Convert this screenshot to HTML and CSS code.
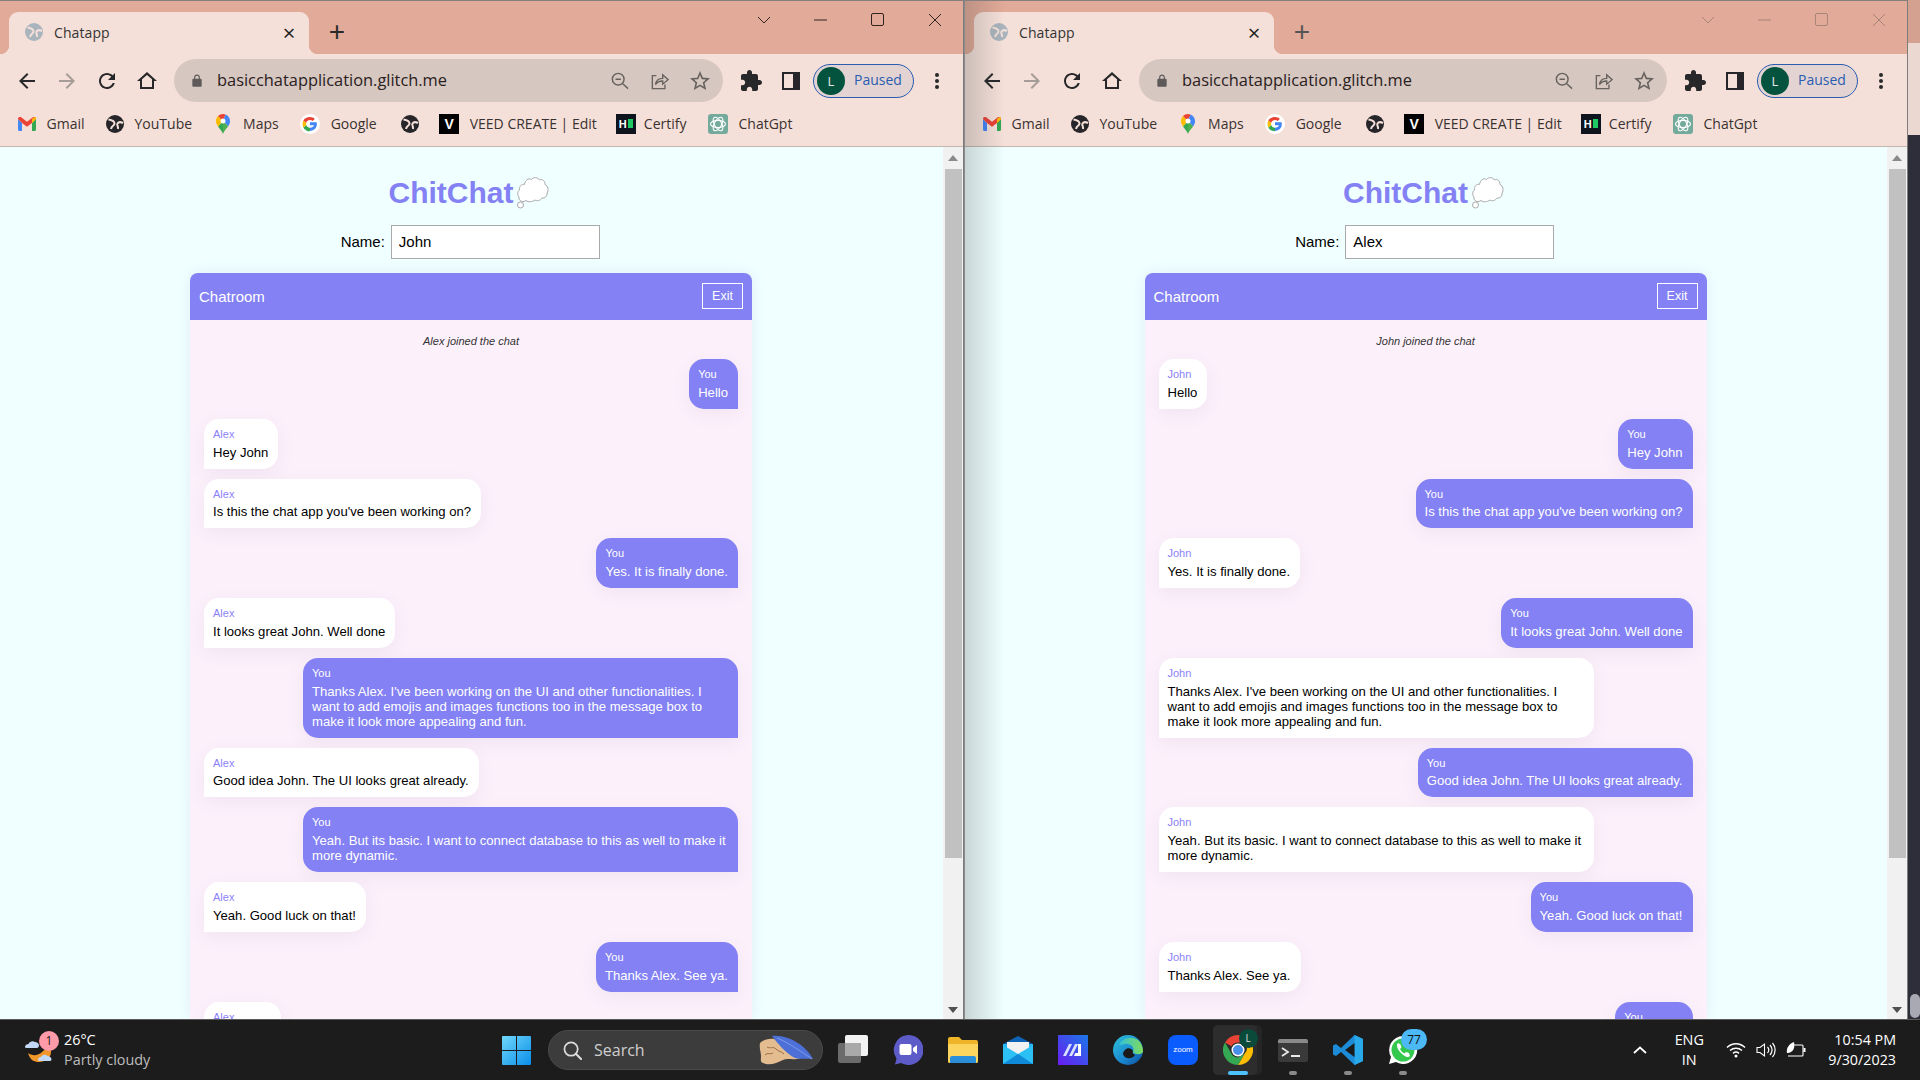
FILE: index.html
```html
<!DOCTYPE html>
<html lang="en">
<head>
  <meta charset="UTF-8" />
  <title>Chatapp</title>
  <link rel="stylesheet" href="styles.css">
</head>
<body>
  <svg class="defs" width="0" height="0">
    <symbol id="i-globe" viewBox="0 0 18 18"><circle cx="9" cy="9" r="9" fill="currentColor"/><path d="M2.500 4.500c3 .5 6 1.500 6 4 0 2.500-3 2-3.500 5.500" fill="none" stroke="#f5e0d9" stroke-width="2"/><path d="M17 8c-2-1-4.500-1-5.500.5s1 3 .5 5.500" fill="none" stroke="#f5e0d9" stroke-width="2"/></symbol>
    <symbol id="i-back" viewBox="0 0 24 24"><path d="M20 11H7.830l5.590-5.590L12 4l-8 8 8 8 1.410-1.410L7.830 13H20v-2z" fill="currentColor"/></symbol>
    <symbol id="i-forward" viewBox="0 0 24 24"><path d="M4 11h12.170l-5.590-5.590L12 4l8 8-8 8-1.410-1.410L16.170 13H4v-2z" fill="currentColor"/></symbol>
    <symbol id="i-reload" viewBox="0 0 24 24"><path d="M17.650 6.350C16.200 4.900 14.210 4 12 4c-4.420 0-7.990 3.580-7.990 8s3.570 8 7.990 8c3.730 0 6.840-2.550 7.730-6h-2.080c-.82 2.330-3.040 4-5.650 4-3.310 0-6-2.690-6-6s2.690-6 6-6c1.660 0 3.140.69 4.220 1.780L13 11h7V4l-2.350 2.350z" fill="currentColor"/></symbol>
    <symbol id="i-home" viewBox="0 0 24 24"><path fill-rule="evenodd" d="M12 3L2 12h3v8h14v-8h3L12 3zm0 2.900l5 4.400V18H7v-7.700l5-4.400z" fill="currentColor"/></symbol>
    <symbol id="i-lock" viewBox="0 0 24 24"><path d="M18 8h-1V6c0-2.760-2.240-5-5-5S7 3.240 7 6v2H6c-1.100 0-2 .9-2 2v10c0 1.100.9 2 2 2h12c1.100 0 2-.9 2-2V10c0-1.100-.9-2-2-2zM9 6c0-1.660 1.340-3 3-3s3 1.340 3 3v2H9V6z" fill="currentColor"/></symbol>
    <symbol id="i-zoomout" viewBox="0 0 20 20"><circle cx="8" cy="8" r="6.500" fill="none" stroke="currentColor" stroke-width="1.600"/><path d="M5 8h6M13 13l6 5.500" fill="none" stroke="currentColor" stroke-width="1.600"/></symbol>
    <symbol id="i-share" viewBox="0 0 20 20"><path d="M6 4H1.500v14.500h14V14M5 14c.5-4 3.500-7 8-7V3l6 5.500-6 5V10c-3 0-6 1-8 4z" fill="none" stroke="currentColor" stroke-width="1.500"/></symbol>
    <symbol id="i-star" viewBox="0 0 24 24"><path d="M22 9.240l-7.190-.62L12 2 9.190 8.630 2 9.240l5.460 4.730L5.820 21 12 17.270 18.180 21l-1.630-7.030L22 9.240zM12 15.400l-3.760 2.270 1-4.280-3.320-2.880 4.380-.38L12 6.100l1.710 4.040 4.380.38-3.320 2.880 1 4.280L12 15.400z" fill="currentColor"/></symbol>
    <symbol id="i-ext" viewBox="0 0 24 24"><path d="M20.500 11H19V7c0-1.100-.9-2-2-2h-4V3.500C13 2.120 11.880 1 10.500 1S8 2.120 8 3.500V5H4c-1.100 0-1.990.9-1.990 2v3.800H3.500c1.490 0 2.700 1.210 2.700 2.700s-1.210 2.700-2.700 2.700H2V20c0 1.100.9 2 2 2h3.800v-1.500c0-1.490 1.210-2.700 2.700-2.700 1.490 0 2.700 1.210 2.700 2.700V22H17c1.100 0 2-.9 2-2v-4h1.500c1.380 0 2.500-1.120 2.500-2.500S21.880 11 20.500 11z" fill="currentColor"/></symbol>
    <symbol id="i-panel" viewBox="0 0 18 18"><rect width="18" height="18" fill="#26262a"/><rect x="2" y="2" width="9" height="14" fill="#f5e0d9"/></symbol>
    <symbol id="i-dots" viewBox="0 0 6 18"><circle cx="3" cy="3" r="2" fill="currentColor"/><circle cx="3" cy="9" r="2" fill="currentColor"/><circle cx="3" cy="15" r="2" fill="currentColor"/></symbol>
    <symbol id="i-gmail" viewBox="0 0 18 14"><path d="M0 2v10.500c0 .8.6 1.500 1.500 1.500H4V6z" fill="#4285f4"/><path d="M14 6v8h2.500c.9 0 1.500-.7 1.500-1.500V2z" fill="#34a853"/><path d="M0 2c0-2 2-2.500 3.500-1.500L9 4.700 14.500.5C16 -.5 18 0 18 2l-4 4-5 3.800L4 6z" fill="#ea4335"/><path d="M14 6l4-4c0-1-.5-1.700-1.200-2L14 2z" fill="#fbbc04"/></symbol>
    <symbol id="i-maps" viewBox="0 0 14 20"><path d="M7 20c-1-3-3-4.500-5-7.500L7 7z" fill="#34a853"/><path d="M7 20c.8-2.800 3-4.800 5.300-7.800L7 7z" fill="#4caf50"/><path d="M2 12.500C.6 10.500 0 9 0 7c0-2 .8-3.600 2-4.900L7 7z" fill="#fbbc04"/><path d="M2 2.100C3.300.8 5 0 7 0c.8 0 1.700.2 2.500.5L7 7z" fill="#ea4335"/><path d="M9.500.5C12 1.400 14 4 14 7c0 2-.6 3.500-1.700 5.200L7 7z" fill="#4285f4"/><circle cx="7" cy="7" r="2.500" fill="#fff"/></symbol>
    <symbol id="i-google" viewBox="0 0 20 20"><circle cx="10" cy="10" r="10" fill="#fff"/><path d="M10 8.300v3h4c-.4 1.500-2 2.500-4 2.500v3c3.800 0 6.800-2.600 6.800-6.500 0-.7 0-1.300-.2-2z" fill="#4285f4"/><path d="M10 13.800c-1.800 0-3.200-1.100-3.700-2.700l-3 2.300c1.200 2.400 3.700 3.900 6.700 3.900z" fill="#34a853"/><path d="M6.300 11.100c-.3-.8-.3-1.700 0-2.400l-3-2.300c-1 2.100-1 4.900 0 7z" fill="#fbbc04"/><path d="M3.300 6.400l3 2.300C6.800 7.200 8.200 6.100 10 6.100c1 0 1.900.4 2.600 1l2.200-2.200C13.600 3.800 12 3.100 10 3.100c-3 0-5.500 1.400-6.700 3.300z" fill="#ea4335"/></symbol>
    <symbol id="i-openai" viewBox="0 0 20 20"><rect width="20" height="20" rx="3" fill="#74aa9c"/><g fill="none" stroke="#fff" stroke-width="1.100"><ellipse cx="10" cy="10" rx="7.500" ry="3.600"/><ellipse cx="10" cy="10" rx="7.500" ry="3.600" transform="rotate(60 10 10)"/><ellipse cx="10" cy="10" rx="7.500" ry="3.600" transform="rotate(120 10 10)"/></g></symbol>
    <symbol id="i-thought" viewBox="0 0 32 32"><g fill="#fff" stroke="#a9a9a9" stroke-width="1"><circle cx="3.500" cy="28" r="3"/><path d="M7 24.500c-3 .5-5.500-1.500-5-4.500-2-2-1.500-6 .5-7C2 9.500 4.500 6.500 7.500 7.500c.5-4 4-7 7-5C16 0 21 0 22.500 3c3-1.500 5.500 1 5.500 4.500 3 1 4 6 2 8.500.5 3-2 5.500-5 5-1.500 2.500-5 3.500-7 2-3 2-6.500 2.500-9 .5z"/></g></symbol>
    <symbol id="i-weather" viewBox="0 0 30 32"><path d="M3 19c4 3 10 3 14-1 3-2 5-5 6-8 2 1 3 4 3 8 0 6-6 10-12 10-5 0-9-2-11-9z" fill="#f0962a"/><path d="M0 13c0-2 2-3 3.500-3C4.500 7.500 8 6.500 10 8c2 0 4 1.500 4 3.500s-1.500 2.500-3 2.500H2c-1.500 0-2-.5-2-1z" fill="#c2d8f5"/><path d="M13 26c0-2 1.500-3 3-3 1-2.500 5-3 6.500-1 2 0 4 1.500 4 3.500 0 1-1 1.500-2.500 1.500h-9c-1.500 0-2-.5-2-1z" fill="#c2d8f5"/></symbol>
    <symbol id="i-start" viewBox="0 0 29 29"><defs><linearGradient id="g-start" x1="0" y1="0" x2="1" y2="1"><stop offset="0" stop-color="#6fd9fb"/><stop offset="1" stop-color="#0a8ce8"/></linearGradient></defs><path d="M0 1a1 1 0 0 1 1-1h13v14H0zM15 0h13a1 1 0 0 1 1 1v13H15zM0 15h14v14H1a1 1 0 0 1-1-1zM15 15h14v13a1 1 0 0 1-1 1H15z" fill="url(#g-start)"/></symbol>
    <symbol id="i-search" viewBox="0 0 20 20"><circle cx="8.500" cy="8.500" r="7" fill="none" stroke="#dcdcdc" stroke-width="1.800"/><path d="M13.500 13.500l5.500 5.500" stroke="#dcdcdc" stroke-width="2.200" stroke-linecap="round"/></symbol>
    <symbol id="i-doodle" viewBox="0 0 56 30"><path d="M1 8c3-3 9-5 14-4 6 1 9 4 14 6 4 2 6 7 12 9 2 2 1 5-3 5-6 1-10-1-14 1-6 3-14 6-20 3-3-1-2-4-2-7 0-4-2-8-1-13z" fill="#e3bd8f"/><path d="M8 12c3 2 6-1 9 2s5 2 8 5M6 20c3-3 5 0 8-2" fill="none" stroke="#9c6f45" stroke-width="1"/><path d="M13 1c9-1 18 2 26 7 6 4 12 10 15 16-6-1-15 1-20-2-8-5-15-13-21-21z" fill="#4c70d8"/><path d="M18 3c10 4 22 12 35 21" fill="none" stroke="#8aa4ee" stroke-width=".8"/></symbol>
    <symbol id="i-taskview" viewBox="0 0 30 30"><rect y="8" width="23" height="20" rx="2" fill="#6b6b6b"/><rect x="7" width="23" height="21" rx="2" fill="#f2f2f2"/><rect x="7" y="8" width="16" height="13" fill="#a9a9a9"/></symbol>
    <symbol id="i-meet" viewBox="0 0 30 30"><path d="M15 0a15 15 0 1 1-7 28l-6 1.500 1.500-6A15 15 0 0 1 15 0z" fill="#5d5bc8"/><rect x="6.500" y="9" width="12" height="11" rx="2" fill="#fff"/><path d="M20 13l4-3v9l-4-3z" fill="#fff"/></symbol>
    <symbol id="i-folder" viewBox="0 0 30 30"><path d="M0 4a2 2 0 0 1 2-2h9l3 3h14a2 2 0 0 1 2 2v19a2 2 0 0 1-2 2H2a2 2 0 0 1-2-2z" fill="#f0b429"/><path d="M0 9h30v17a2 2 0 0 1-2 2H2a2 2 0 0 1-2-2z" fill="#fcd55f"/><path d="M4 21h22a2 2 0 0 1 2 2v5H2v-5a2 2 0 0 1 2-2z" fill="#2a8fd8"/></symbol>
    <symbol id="i-mail" viewBox="0 0 30 30"><path d="M15 1l15 8v4H0V9z" fill="#0f63b5"/><path d="M0 9h30v20H0z" fill="#28b4ee"/><path d="M4 7h22v7l-11 6-11-6z" fill="#f2f2f2"/><path d="M0 10l15 9 15-9v19H0z" fill="#2cc0f5"/><path d="M0 29l15-10 15 10z" fill="#0f8ad8"/></symbol>
    <symbol id="i-math" viewBox="0 0 30 30"><defs><linearGradient id="g-math" x1="0" y1="1" x2="1" y2="0"><stop offset="0" stop-color="#6a1cf0"/><stop offset="1" stop-color="#1a78e8"/></linearGradient></defs><rect width="30" height="30" fill="url(#g-math)"/><path d="M5 21l6-12h3l-6 12zM11 21l6-12h3l-6 12z" fill="#dbe2ff"/><path d="M20 9h3v12h-7l1.200-3H20z" fill="#fff"/></symbol>
    <symbol id="i-edge" viewBox="0 0 30 30"><defs><linearGradient id="g-edge" x1="0" y1="0" x2="1" y2="1"><stop offset="0" stop-color="#2cc4d8"/><stop offset=".6" stop-color="#1b84d0"/><stop offset="1" stop-color="#0c4f98"/></linearGradient><linearGradient id="g-edge2" x1="0" y1="0" x2="1" y2="0"><stop offset="0" stop-color="#35c1d8"/><stop offset="1" stop-color="#7fdb5c"/></linearGradient></defs><circle cx="15" cy="15" r="15" fill="url(#g-edge)"/><path d="M6 10C9 3 19 0 26 6c3 3 4 7 4 11-2 3-8 3-10 0 2-5-3-9-8-8-3 .5-5 1-6 1z" fill="url(#g-edge2)"/><path d="M12 15c2-3 7-2 8 1-1 2 0 3 2 4-3 5-11 4-12-1 0-2 1-3 2-4z" fill="#1a1a1a"/></symbol>
    <symbol id="i-chrome" viewBox="0 0 30 30"><path d="M15 0a15 15 0 0 1 13 7.500H15a7.500 7.500 0 0 0-6.500 3.750L2 7.500A15 15 0 0 1 15 0z" fill="#ea4335"/><path d="M28 7.500A15 15 0 0 1 15 30l6.500-11.250a7.500 7.500 0 0 0 0-11.250z" fill="#fbbc04"/><path d="M15 30A15 15 0 0 1 2 7.500l6.500 11.250a7.500 7.500 0 0 0 6.500 3.750l6.500-3.750z" fill="#34a853"/><circle cx="15" cy="15" r="6.500" fill="#fff"/><circle cx="15" cy="15" r="5" fill="#4a90e8"/></symbol>
    <symbol id="i-terminal" viewBox="0 0 30 23"><rect width="30" height="23" rx="2" fill="#3a3a3a"/><path d="M2 0h26a2 2 0 0 1 2 2v2H0V2a2 2 0 0 1 2-2z" fill="#8a8a8a"/><path d="M4 9l6 4-6 4" fill="none" stroke="#e8e8e8" stroke-width="1.800"/><path d="M13 17h9" stroke="#e8e8e8" stroke-width="2"/></symbol>
    <symbol id="i-vscode" viewBox="0 0 30 30"><path d="M21.500 0L30 4v22l-8.500 4L8 17l-5 4-3-1.500v-9L3 9l5 4z" fill="#1c8cd8"/><path d="M21.500 0L30 4v22l-8.500 4z" fill="#29a8ea"/><path d="M21.500 8L12 15l9.500 7z" fill="#1a1a1a"/></symbol>
    <symbol id="i-whatsapp" viewBox="0 0 30 30"><path d="M15 1a14 14 0 1 1-7 26l-7 2 2-7A14 14 0 0 1 15 1z" fill="#fff"/><circle cx="15" cy="15" r="11.500" fill="#35c84f"/><path d="M10 8c-2 2-1 6 3 10s7 5 9 3l-1-3-3-1-1.500 1.500c-2-1-3.500-2.500-4.500-4.500l1.500-1.500-1-3z" fill="#fff"/></symbol>
    <symbol id="i-wifi" viewBox="0 0 20 16"><path d="M1 5.500c5-5 13-5 18 0M4 8.500c3.500-3 8.500-3 12 0M7 11.300c1.700-1.400 4.300-1.400 6 0" fill="none" stroke="#fff" stroke-width="1.500"/><circle cx="10" cy="14" r="1.500" fill="#fff"/></symbol>
    <symbol id="i-volume" viewBox="0 0 20 16"><path d="M1 5.500h3L8.500 2v12L4 10.500H1z" fill="none" stroke="#fff" stroke-width="1.100"/><path d="M11.500 5c1.500 1.700 1.500 4.300 0 6M14 3c2.500 3 2.500 7 0 10M16.500 1c3.500 4 3.500 10 0 14" fill="none" stroke="#fff" stroke-width="1.200"/></symbol>
    <symbol id="i-battery" viewBox="0 0 20 16"><path d="M8 3h8a1 1 0 0 1 1 1v9a1 1 0 0 1-1 1H2" fill="none" stroke="#fff" stroke-width="1.100"/><rect x="17.500" y="6" width="2" height="4" fill="#fff"/><path d="M1 11C0 6 3 2 8 0c1 5 0 10-6 11z" fill="#fff"/></symbol>
    <symbol id="i-tray-up" viewBox="0 0 14 8"><path d="M1 7l6-5.500L13 7" fill="none" stroke="#fff" stroke-width="1.800"/></symbol>
  </svg>

  <div class="desktop">
    <!-- left window, John -->
    <section class="window">
      <div class="tabstrip">
        <div class="tab">
          <svg class="favicon"><use href="#i-globe"/></svg>
          <span class="tab-title">Chatapp</span>
          <span class="tab-close">×</span>
        </div>
        <span class="new-tab">+</span>
        <div class="win-controls">
          <span class="win-btn"><svg width="14" height="8" viewBox="0 0 14 8"><path d="M1 1l6 6 6-6" fill="none" stroke="currentColor"/></svg></span>
          <span class="win-btn"><svg width="14" height="14" viewBox="0 0 14 14"><path d="M0 7h13" stroke="currentColor"/></svg></span>
          <span class="win-btn"><svg width="14" height="14" viewBox="0 0 14 14"><rect x=".5" y=".5" width="12" height="12" rx="1.500" fill="none" stroke="currentColor"/></svg></span>
          <span class="win-btn"><svg width="14" height="14" viewBox="0 0 14 14"><path d="M1 1l12 12M13 1L1 13" stroke="currentColor"/></svg></span>
        </div>
      </div>
      <div class="toolbar">
        <span class="tool"><svg class="ic"><use href="#i-back"/></svg></span>
        <span class="tool off"><svg class="ic"><use href="#i-forward"/></svg></span>
        <span class="tool"><svg class="ic"><use href="#i-reload"/></svg></span>
        <span class="tool"><svg class="ic"><use href="#i-home"/></svg></span>
        <div class="omnibox">
          <svg class="lock"><use href="#i-lock"/></svg>
          <span class="url">basicchatapplication.glitch.me</span>
          <span class="tool grey"><svg class="ic-s"><use href="#i-zoomout"/></svg></span>
          <span class="tool grey"><svg class="ic-s"><use href="#i-share"/></svg></span>
          <span class="tool grey"><svg class="ic"><use href="#i-star"/></svg></span>
        </div>
        <span class="tool ext"><svg class="ic"><use href="#i-ext"/></svg></span>
        <span class="tool"><svg class="ic-s"><use href="#i-panel"/></svg></span>
        <div class="profile"><span class="avatar">L</span><span class="paused">Paused</span></div>
        <span class="tool"><svg class="dots"><use href="#i-dots"/></svg></span>
      </div>
      <div class="bookmarks">
        <span class="mark"><svg class="b-gmail"><use href="#i-gmail"/></svg>Gmail</span>
        <span class="mark"><svg class="b-icon"><use href="#i-globe"/></svg>YouTube</span>
        <span class="mark"><svg class="b-maps"><use href="#i-maps"/></svg>Maps</span>
        <span class="mark"><svg class="b-icon b-wide"><use href="#i-google"/></svg>Google</span>
        <span class="mark"><svg class="b-icon b-lone"><use href="#i-globe"/></svg></span>
        <span class="mark"><span class="box-v">V</span>VEED CREATE | Edit</span>
        <span class="mark"><span class="box-h">H<i></i></span>Certify</span>
        <span class="mark"><svg class="b-wide"><use href="#i-openai"/></svg>ChatGpt</span>
      </div>
      <div class="viewport">
        <main class="page">
          <div class="logo">ChitChat<svg class="thought"><use href="#i-thought"/></svg></div>
          <div class="name-row"><label>Name:</label><input class="name-input" type="text" value="John"></div>
          <div class="chat">
            <div class="chat-head"><span>Chatroom</span><button class="exit">Exit</button></div>
            <div class="chat-body">
              <div class="system">Alex joined the chat</div>
              <div class="msg me"><div class="who">You</div><div>Hello</div></div>
              <div class="msg"><div class="who">Alex</div><div>Hey John</div></div>
              <div class="msg"><div class="who">Alex</div><div>Is this the chat app you've been working on?</div></div>
              <div class="msg me"><div class="who">You</div><div>Yes. It is finally done.</div></div>
              <div class="msg"><div class="who">Alex</div><div>It looks great John. Well done</div></div>
              <div class="msg me"><div class="who">You</div><div>Thanks Alex. I've been working on the UI and other functionalities. I want to add emojis and images functions too in the message box to make it look more appealing and fun.</div></div>
              <div class="msg"><div class="who">Alex</div><div>Good idea John. The UI looks great already.</div></div>
              <div class="msg me"><div class="who">You</div><div>Yeah. But its basic. I want to connect database to this as well to make it more dynamic.</div></div>
              <div class="msg"><div class="who">Alex</div><div>Yeah. Good luck on that!</div></div>
              <div class="msg me"><div class="who">You</div><div>Thanks Alex. See ya.</div></div>
              <div class="msg"><div class="who">Alex</div><div>Bye John.</div></div>
            </div>
          </div>
        </main>
        <div class="scrollbar"><span class="arrow up"></span><span class="thumb"></span><span class="arrow down"></span></div>
      </div>
    </section>

    <!-- right window, Alex -->
    <section class="window second">
      <div class="tabstrip">
        <div class="tab">
          <svg class="favicon"><use href="#i-globe"/></svg>
          <span class="tab-title">Chatapp</span>
          <span class="tab-close">×</span>
        </div>
        <span class="new-tab">+</span>
        <div class="win-controls">
          <span class="win-btn"><svg width="14" height="8" viewBox="0 0 14 8"><path d="M1 1l6 6 6-6" fill="none" stroke="currentColor"/></svg></span>
          <span class="win-btn"><svg width="14" height="14" viewBox="0 0 14 14"><path d="M0 7h13" stroke="currentColor"/></svg></span>
          <span class="win-btn"><svg width="14" height="14" viewBox="0 0 14 14"><rect x=".5" y=".5" width="12" height="12" rx="1.500" fill="none" stroke="currentColor"/></svg></span>
          <span class="win-btn"><svg width="14" height="14" viewBox="0 0 14 14"><path d="M1 1l12 12M13 1L1 13" stroke="currentColor"/></svg></span>
        </div>
      </div>
      <div class="toolbar">
        <span class="tool"><svg class="ic"><use href="#i-back"/></svg></span>
        <span class="tool off"><svg class="ic"><use href="#i-forward"/></svg></span>
        <span class="tool"><svg class="ic"><use href="#i-reload"/></svg></span>
        <span class="tool"><svg class="ic"><use href="#i-home"/></svg></span>
        <div class="omnibox">
          <svg class="lock"><use href="#i-lock"/></svg>
          <span class="url">basicchatapplication.glitch.me</span>
          <span class="tool grey"><svg class="ic-s"><use href="#i-zoomout"/></svg></span>
          <span class="tool grey"><svg class="ic-s"><use href="#i-share"/></svg></span>
          <span class="tool grey"><svg class="ic"><use href="#i-star"/></svg></span>
        </div>
        <span class="tool ext"><svg class="ic"><use href="#i-ext"/></svg></span>
        <span class="tool"><svg class="ic-s"><use href="#i-panel"/></svg></span>
        <div class="profile"><span class="avatar">L</span><span class="paused">Paused</span></div>
        <span class="tool"><svg class="dots"><use href="#i-dots"/></svg></span>
      </div>
      <div class="bookmarks">
        <span class="mark"><svg class="b-gmail"><use href="#i-gmail"/></svg>Gmail</span>
        <span class="mark"><svg class="b-icon"><use href="#i-globe"/></svg>YouTube</span>
        <span class="mark"><svg class="b-maps"><use href="#i-maps"/></svg>Maps</span>
        <span class="mark"><svg class="b-icon b-wide"><use href="#i-google"/></svg>Google</span>
        <span class="mark"><svg class="b-icon b-lone"><use href="#i-globe"/></svg></span>
        <span class="mark"><span class="box-v">V</span>VEED CREATE | Edit</span>
        <span class="mark"><span class="box-h">H<i></i></span>Certify</span>
        <span class="mark"><svg class="b-wide"><use href="#i-openai"/></svg>ChatGpt</span>
      </div>
      <div class="viewport">
        <main class="page">
          <div class="logo">ChitChat<svg class="thought"><use href="#i-thought"/></svg></div>
          <div class="name-row"><label>Name:</label><input class="name-input" type="text" value="Alex"></div>
          <div class="chat">
            <div class="chat-head"><span>Chatroom</span><button class="exit">Exit</button></div>
            <div class="chat-body">
              <div class="system">John joined the chat</div>
              <div class="msg"><div class="who">John</div><div>Hello</div></div>
              <div class="msg me"><div class="who">You</div><div>Hey John</div></div>
              <div class="msg me"><div class="who">You</div><div>Is this the chat app you've been working on?</div></div>
              <div class="msg"><div class="who">John</div><div>Yes. It is finally done.</div></div>
              <div class="msg me"><div class="who">You</div><div>It looks great John. Well done</div></div>
              <div class="msg"><div class="who">John</div><div>Thanks Alex. I've been working on the UI and other functionalities. I want to add emojis and images functions too in the message box to make it look more appealing and fun.</div></div>
              <div class="msg me"><div class="who">You</div><div>Good idea John. The UI looks great already.</div></div>
              <div class="msg"><div class="who">John</div><div>Yeah. But its basic. I want to connect database to this as well to make it more dynamic.</div></div>
              <div class="msg me"><div class="who">You</div><div>Yeah. Good luck on that!</div></div>
              <div class="msg"><div class="who">John</div><div>Thanks Alex. See ya.</div></div>
              <div class="msg me"><div class="who">You</div><div>Bye John.</div></div>
            </div>
          </div>
        </main>
        <div class="scrollbar"><span class="arrow up"></span><span class="thumb"></span><span class="arrow down"></span></div>
      </div>
    </section>
    <div class="peek"><span class="peek-top"></span><span class="peek-mid"></span><span class="peek-thumb"></span></div>
  </div>

  <footer class="taskbar">
    <div class="weather">
      <span class="weather-icon"><svg class="w-svg"><use href="#i-weather"/></svg><span class="w-badge">1</span></span>
      <div class="weather-text"><div>26°C</div><div class="dim">Partly cloudy</div></div>
    </div>
    <div class="apps">
      <svg class="start"><use href="#i-start"/></svg>
      <div class="search"><svg class="s-icon"><use href="#i-search"/></svg><span>Search</span><svg class="doodle"><use href="#i-doodle"/></svg></div>
      <span class="app"><svg><use href="#i-taskview"/></svg></span>
      <span class="app"><svg><use href="#i-meet"/></svg></span>
      <span class="app"><svg><use href="#i-folder"/></svg></span>
      <span class="app"><svg><use href="#i-mail"/></svg></span>
      <span class="app"><svg><use href="#i-math"/></svg></span>
      <span class="app"><svg><use href="#i-edge"/></svg></span>
      <span class="app"><span class="zoom-tile">zoom</span></span>
      <span class="app active"><svg><use href="#i-chrome"/></svg><span class="chrome-badge">L</span><i class="run on"></i></span>
      <span class="app"><svg class="term"><use href="#i-terminal"/></svg><i class="run"></i></span>
      <span class="app"><svg><use href="#i-vscode"/></svg><i class="run"></i></span>
      <span class="app"><svg><use href="#i-whatsapp"/></svg><span class="wa-badge">77</span><i class="run"></i></span>
    </div>
    <div class="tray">
      <svg class="tray-up"><use href="#i-tray-up"/></svg>
      <div class="lang">ENG<br>IN</div>
      <svg class="t-icon"><use href="#i-wifi"/></svg>
      <svg class="t-icon"><use href="#i-volume"/></svg>
      <svg class="t-icon"><use href="#i-battery"/></svg>
      <div class="clock">10:54 PM<br>9/30/2023</div>
    </div>
  </footer>
</body>
</html>
```
FILE: styles.css
```css
* {
  box-sizing: border-box;
}

body {
  margin: 0;
  width: 1920px;
  height: 1080px;
  overflow: hidden;
  display: flex;
  flex-direction: column;
  background: #1c1c1c;
  font-family: "Open Sans", sans-serif;
}

.defs {
  position: absolute;
}

.desktop {
  display: flex;
  height: 1019px;
  background: #8a8a8a;
  overflow: hidden;
}

.window {
  position: relative;
  width: 964px;
  height: 100%;
  display: flex;
  flex-direction: column;
  border-top: 1px solid #85807e;
  border-right: 1px solid #7d7d7d;
}

.window.second {
  width: 943px;
  margin-left: 1px;
}

.window.second::before {
  content: "";
  position: absolute;
  left: 0;
  top: 0;
  bottom: 0;
  width: 40px;
  background: linear-gradient(90deg, rgba(40, 50, 50, 0.2), rgba(40, 50, 50, 0));
  z-index: 5;
  pointer-events: none;
}

/* chrome */
.tabstrip {
  height: 53px;
  flex: none;
  display: flex;
  align-items: flex-end;
  background: #e2aa98;
  padding-left: 9px;
}

.tab {
  position: relative;
  width: 300px;
  height: 42px;
  display: flex;
  align-items: center;
  background: #f5e0d9;
  border-radius: 9px 9px 0 0;
  padding: 0 0 2px 16px;
  font-size: 14px;
  color: #333;
}

.tab::before,
.tab::after {
  content: "";
  position: absolute;
  bottom: 0;
  width: 9px;
  height: 9px;
}

.tab::before {
  left: -9px;
  background: radial-gradient(circle at 0 0, transparent 9px, #f5e0d9 9.5px);
}

.tab::after {
  right: -9px;
  background: radial-gradient(circle at 100% 0, transparent 9px, #f5e0d9 9.5px);
}

.favicon {
  width: 18px;
  height: 18px;
  color: #a9b4bd;
  margin-right: 11px;
}

.tab-title {
  flex: 1;
  letter-spacing: 0.1px;
}

.tab-close {
  width: 24px;
  font-size: 22px;
  line-height: 22px;
  color: #222;
  text-align: center;
  margin-right: 8px;
}

.new-tab {
  width: 56px;
  height: 42px;
  padding-bottom: 2px;
  display: flex;
  align-items: center;
  justify-content: center;
  font-family: "Liberation Sans", sans-serif;
  font-size: 28px;
  color: #2a2a2a;
}

.win-controls {
  margin-left: auto;
  height: 100%;
  display: flex;
}

.win-btn {
  width: 57px;
  height: 38px;
  display: flex;
  align-items: center;
  justify-content: center;
  color: #33231e;
}

.second .win-btn {
  color: #a98478;
}

.second .new-tab {
  color: #555;
}

.toolbar {
  height: 53px;
  flex: none;
  display: flex;
  align-items: center;
  background: #f5e0d9;
  padding: 0 6px 0 7px;
}

.tool {
  width: 40px;
  height: 40px;
  flex: none;
  display: flex;
  align-items: center;
  justify-content: center;
  color: #28282a;
}

.tool.off {
  color: #a69c98;
}

.tool.grey {
  color: #68625f;
}

.ic {
  width: 24px;
  height: 24px;
}

.ic-s {
  width: 18px;
  height: 18px;
}

.dots {
  width: 6px;
  height: 18px;
}

.omnibox {
  flex: 1;
  height: 43px;
  margin: 0 8px 0 7px;
  display: flex;
  align-items: center;
  background: #d6c7c0;
  border-radius: 22px;
  padding: 0 3px 0 16px;
}

.lock {
  width: 14px;
  height: 16px;
  color: #5f5a5a;
  margin-right: 13px;
}

.url {
  flex: 1;
  padding-bottom: 2px;
  font-size: 16.4px;
  color: #2a2020;
}

.profile {
  width: 101px;
  height: 34px;
  flex: none;
  margin: 0 3px 0 2px;
  display: flex;
  align-items: center;
  background: #e3d4d3;
  border: 1px solid #2a5cb0;
  border-radius: 17px;
  padding-left: 3px;
}

.avatar {
  width: 28px;
  height: 28px;
  border-radius: 50%;
  background: #03533f;
  color: #e8e8e8;
  font-size: 13px;
  display: flex;
  align-items: center;
  justify-content: center;
}

.paused {
  margin-left: 9px;
  padding-bottom: 2px;
  font-size: 14px;
  color: #2a5cb0;
}

.bookmarks {
  height: 40px;
  flex: none;
  display: flex;
  align-items: center;
  gap: 21.5px;
  background: #f5e0d9;
  border-bottom: 1px solid #c4b5ae;
  padding: 0 0 6px 18px;
  font-size: 14px;
  color: #3a3230;
}

.mark {
  display: flex;
  align-items: center;
  gap: 10.5px;
}

.b-gmail {
  width: 18px;
  height: 14px;
}

.b-icon {
  width: 18px;
  height: 18px;
  color: #26262a;
}

.b-lone {
  margin-left: 2.5px;
}

.b-maps {
  width: 14px;
  height: 20px;
  margin: 0 2.5px;
}

.b-wide {
  width: 20px;
  height: 20px;
}

.box-v,
.box-h {
  width: 20px;
  height: 20px;
  display: flex;
  align-items: center;
  justify-content: center;
  color: #fff;
  font-family: "Liberation Sans", sans-serif;
  font-weight: bold;
  font-size: 14px;
}

.box-v {
  background: #000;
  margin-left: -1px;
}

.box-h {
  background: #0e141e;
  font-size: 11px;
  gap: 1px;
  margin: 0 -2.5px;
}

.box-h i {
  width: 5px;
  height: 9px;
  background: #1ec964;
}

/* page */
.viewport {
  flex: 1;
  min-height: 0;
  display: flex;
  background: #f0ffff;
  overflow: hidden;
}

.page {
  flex: 1;
  min-width: 0;
  display: flex;
  flex-direction: column;
  align-items: center;
  padding: 29px 1px 0 0;
  font-family: "Liberation Sans", Arial, sans-serif;
}

.logo {
  display: flex;
  align-items: center;
  gap: 4px;
  height: 33px;
  margin: 0 4px 1px 0;
  font-size: 30px;
  font-weight: bold;
  color: #8381f3;
}

.thought {
  width: 32px;
  height: 32px;
}

.name-row {
  margin: 15px 0 0 -1.5px;
  display: flex;
  align-items: center;
  gap: 6px;
  font-size: 15px;
  color: #000;
}

.name-row label {
  padding-bottom: 2px;
}

.name-input {
  width: 209px;
  height: 34px;
  border: 1px solid #a9a9a9;
  border-radius: 0;
  outline: none;
  padding: 0 7px 2px;
  font-family: "Liberation Sans", Arial, sans-serif;
  font-size: 15px;
  color: #000;
}

.chat {
  width: 562px;
  margin-top: 14px;
  flex: 1;
  min-height: 0;
  display: flex;
  flex-direction: column;
  background: #fcf0fb;
  border-radius: 8px 8px 0 0;
  box-shadow: 0 0 14px rgba(90, 90, 160, 0.1);
}

.chat-head {
  height: 47px;
  flex: none;
  display: flex;
  align-items: center;
  justify-content: space-between;
  background: #8381f3;
  border-radius: 8px 8px 0 0;
  padding: 0 9px;
  color: #fff;
  font-size: 15px;
}

.exit {
  width: 41px;
  height: 26px;
  margin-bottom: 2px;
  background: transparent;
  border: 1px solid #fff;
  color: #fff;
  padding: 0;
  font-family: "Liberation Sans", Arial, sans-serif;
  font-size: 12.5px;
}

.chat-body {
  flex: 1;
  min-height: 0;
  overflow: hidden;
  display: flex;
  flex-direction: column;
  align-items: flex-start;
  gap: 10px;
  padding: 15px 14px 0;
}

.system {
  align-self: center;
  height: 13px;
  margin-bottom: 1px;
  font-size: 11px;
  line-height: 13px;
  font-style: italic;
  color: #333;
}

.msg {
  flex: none;
  max-width: 435px;
  padding: 9px 10px 9px 9px;
  background: #fff;
  border-radius: 15px 15px 15px 0;
  box-shadow: 0 5px 18px rgba(100, 80, 120, 0.07);
  font-size: 13.1px;
  line-height: 15px;
  color: #000;
}

.msg.me {
  align-self: flex-end;
  background: #8381f3;
  border-radius: 15px 15px 0 15px;
  color: #fff;
}

.who {
  height: 12.75px;
  margin-bottom: 4px;
  font-size: 11px;
  line-height: 13px;
  color: #8c82f8;
}

.me .who {
  color: #fff;
}

.scrollbar {
  width: 20px;
  flex: none;
  position: relative;
  display: flex;
  flex-direction: column;
  align-items: center;
  background: #f1f1f1;
}

.thumb {
  width: 17px;
  height: 689px;
  margin-top: 22px;
  background: #c1c1c1;
}

.arrow {
  position: absolute;
  left: 5px;
  width: 0;
  height: 0;
  border-left: 5px solid transparent;
  border-right: 5px solid transparent;
}

.arrow.up {
  top: 8px;
  border-bottom: 6px solid #8a8a8a;
}

.arrow.down {
  bottom: 6px;
  border-top: 6px solid #505050;
}

.peek {
  position: relative;
  flex: 1;
  display: flex;
  flex-direction: column;
  background: #2e2e3a;
}

.peek-top {
  height: 43px;
  background: #d4a090;
}

.peek-mid {
  height: 92px;
  background: #ebd8d1;
}

.peek-thumb {
  position: absolute;
  right: 0;
  bottom: 1px;
  width: 10px;
  height: 24px;
  background: #a9a9b4;
  border-radius: 5px;
}

/* taskbar */
.taskbar {
  height: 61px;
  flex: none;
  display: flex;
  align-items: center;
  background: #1c1c1c;
  border-top: 1px solid #5a5a5a;
  color: #fff;
  font-size: 14px;
}

.weather {
  width: 502px;
  flex: none;
  display: flex;
  align-items: center;
  padding-left: 25px;
}

.weather-icon {
  position: relative;
  width: 30px;
  height: 32px;
}

.w-svg {
  width: 30px;
  height: 32px;
}

.w-badge {
  position: absolute;
  left: 14px;
  top: -3px;
  width: 20px;
  height: 20px;
  border-radius: 50%;
  background: #ff9aa8;
  color: #1c1c1c;
  font-size: 12px;
  line-height: 20px;
  text-align: center;
}

.weather-text {
  margin-left: 9px;
  line-height: 20px;
  font-size: 14.4px;
}

.dim {
  color: #bdbdbd;
}

.apps {
  display: flex;
  align-items: center;
}

.start {
  width: 29px;
  height: 29px;
}

.search {
  width: 275px;
  height: 40px;
  margin: 0 2.500px 0 17px;
  display: flex;
  align-items: center;
  background: #3c3c3c;
  border: 1px solid #4a4a4a;
  border-radius: 20px;
  padding-left: 14px;
  color: #cfcfcf;
  font-size: 16px;
}

.s-icon {
  width: 19px;
  height: 19px;
  margin-right: 12px;
}

.doodle {
  width: 56px;
  height: 30px;
  margin-left: auto;
  margin-right: 7px;
}

.app {
  position: relative;
  width: 55px;
  height: 50px;
  display: flex;
  align-items: center;
  justify-content: center;
}

.app svg {
  position: relative;
  width: 30px;
  height: 30px;
}

.app svg.term {
  height: 23px;
}

.app.active::before {
  content: "";
  position: absolute;
  left: 2px;
  top: 0;
  width: 44px;
  height: 50px;
  background: #2d2d2d;
  border-radius: 5px;
  box-shadow: 5px 0 0 #252525;
}

.zoom-tile {
  width: 30px;
  height: 30px;
  border-radius: 8px;
  background: #0b5cff;
  color: #fff;
  font-family: "Liberation Sans", sans-serif;
  font-size: 8px;
  line-height: 30px;
  text-align: center;
}

.chrome-badge {
  position: absolute;
  left: 28px;
  top: 4px;
  width: 19px;
  height: 19px;
  border-radius: 50%;
  background: #0a4a3a;
  color: #ddd;
  font-size: 10px;
  line-height: 19px;
  text-align: center;
}

.wa-badge {
  position: absolute;
  left: 25.5px;
  top: 4px;
  width: 26px;
  height: 21px;
  border-radius: 11px;
  background: #4cb8f5;
  color: #111;
  font-size: 12px;
  line-height: 21px;
  text-align: center;
}

.run {
  position: absolute;
  bottom: 0;
  left: 50%;
  width: 8px;
  height: 4px;
  margin-left: -4px;
  border-radius: 2px;
  background: #8a8a8a;
}

.run.on {
  width: 20px;
  margin-left: -10px;
  background: #4cc2ff;
}

.tray {
  margin-left: auto;
  display: flex;
  align-items: center;
  padding-right: 24px;
  font-size: 14px;
}

.tray-up {
  width: 14px;
  height: 8px;
  margin-right: 27px;
}

.lang {
  width: 30px;
  text-align: center;
  line-height: 20px;
  margin-right: 22px;
  font-size: 14.4px;
}

.t-icon {
  width: 20px;
  height: 16px;
  margin-right: 10px;
}

.clock {
  margin-left: 12px;
  text-align: right;
  line-height: 20px;
  font-size: 14.3px;
}
```
